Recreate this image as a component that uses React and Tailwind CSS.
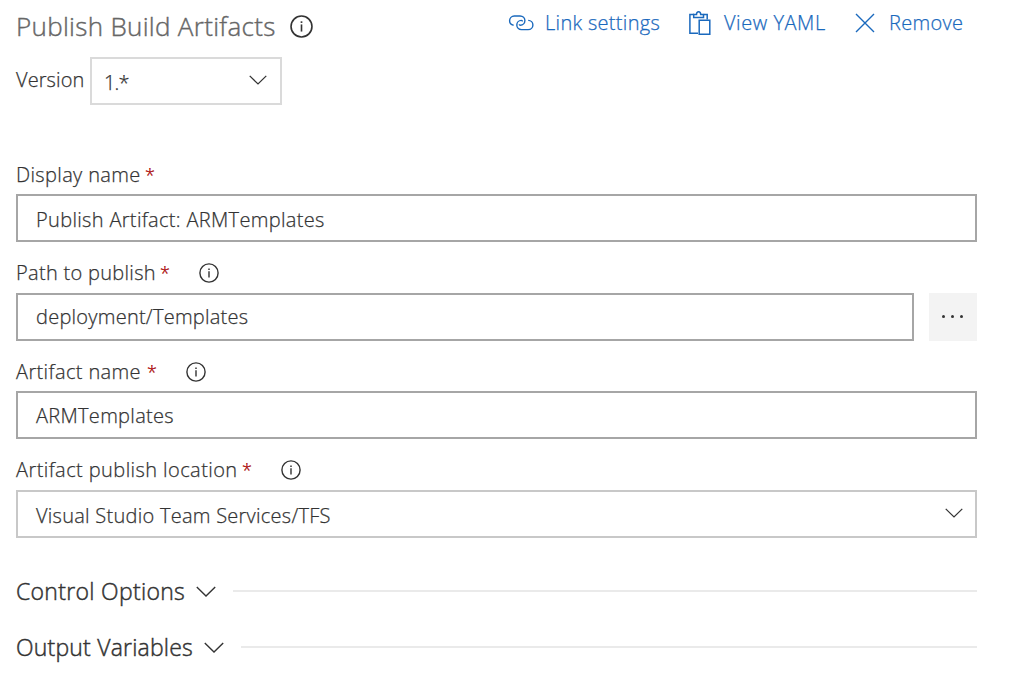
const InfoIcon = ({ className }) => (
  <svg viewBox="0 0 20 20" className={className} fill="none" stroke="#333333" strokeWidth="1.4">
    <circle cx="10" cy="10" r="9.1" />
    <path d="M10 8.2V14.4" strokeWidth="1.4" />
    <path d="M10 5.5V6.9" strokeWidth="1.5" />
  </svg>
);

const Chevron = ({ className }) => (
  <svg viewBox="0 0 20 11" className={className} fill="none" stroke="#333333" strokeWidth="1.4">
    <path d="M0.8 0.9L10 9.9L19.2 0.9" />
  </svg>
);

const LinkIcon = () => (
  <svg viewBox="0 0 26 18" className="h-[18px] w-[26px]" fill="none" stroke="#1a69bd" strokeWidth="1.4">
    <path d="M5.6 11.2C3.2 10.8 1.6 9 1.6 6.7C1.6 4.1 3.6 2 6.3 2H12.1C14.8 2 16.9 4 16.9 6.6C16.9 9.2 14.9 11.2 12.3 11.2C11.8 11.2 11.3 10.7 11.3 10.2" />
    <path d="M20.2 6.4C23 6.4 24.9 8.4 24.9 10.9C24.9 13.6 22.8 15.6 20.1 15.6H13.4C10.8 15.6 8.8 13.6 8.8 11.1C8.8 8.4 10.9 6.4 13.3 6.4C14 6.4 14.5 6.8 14.5 7.4" />
  </svg>
);

const ClipboardIcon = () => (
  <svg viewBox="0 0 24 26" className="h-[26px] w-6" fill="none" stroke="#1a69bd" strokeWidth="1.5">
    <path d="M6 4.6H1.9V23.2H10" />
    <path d="M15.5 4.6H19.2V9.6" />
    <path d="M5.7 7.5V4.5H8.5C8.5 2.8 9.3 1.7 10.6 1.7S12.7 2.8 12.7 4.5H15.5V7.5Z" />
    <path d="M11.2 10.2H21.8V24.2H11.2Z" />
  </svg>
);

const CloseIcon = () => (
  <svg viewBox="0 0 20 20" className="size-5" fill="none" stroke="#1a69bd" strokeWidth="1.4">
    <path d="M1 1L19 19M19 1L1 19" />
  </svg>
);

function Label({ children, text, info }) {
  return (
    <div className="flex h-7 items-center leading-7">
      <span className={text}>{children}</span>
      <span className="ml-[5px] w-[10px] text-[18px]/[26px] text-[#a80000]">*</span>
      {info && <InfoIcon className={info} />}
    </div>
  );
}

function Section({ title, text, line }) {
  return (
    <div className="flex h-8 items-center">
      <h2 className={text}>{title}</h2>
      <Chevron className="ml-[11px] h-[11px] w-5" />
      <div className={line} />
    </div>
  );
}

export default function App() {
  return (
    <main className="h-[692px] w-[1019px] overflow-hidden bg-white pr-[42px] pl-4 font-['Open_Sans','Noto_Sans',sans-serif] text-[20px] font-light tracking-[0.3px] text-[#333333] [-webkit-text-stroke:0.25px]">
      <header className="flex h-[53px] items-center justify-between">
        <div className="flex items-center">
          <h1 className="w-[259px] text-[26px] whitespace-nowrap text-[#666666] [-webkit-text-stroke:0.4px]">Publish Build Artifacts</h1>
          <InfoIcon className="ml-[15px] size-[23px]" />
        </div>
        <nav className="mr-[14px] flex h-[46px] items-center self-start whitespace-nowrap text-[#1a69bd]">
          <LinkIcon />
          <span className="ml-[11px] w-[116px]">Link settings</span>
          <span className="ml-[27px]"><ClipboardIcon /></span>
          <span className="ml-[12px] w-[102px] tracking-[0.55px]">View YAML</span>
          <span className="ml-[29px]"><CloseIcon /></span>
          <span className="ml-[14px] w-[74px]">Remove</span>
        </nav>
      </header>

      <div className="mt-1 flex h-12 items-center">
        <span className="w-[74px] pb-[3px] whitespace-nowrap tracking-[0.1px]">Version</span>
        <div className="flex h-12 w-[192px] items-center justify-between border-2 border-[#dadada] pr-[13px] pl-3">
          <span className="pt-1 tracking-[-0.8px]">1.*</span>
          <Chevron className="mb-0.5 h-[10px] w-[18px]" />
        </div>
      </div>

      <div className="mt-14">
        <Label text="w-[124px] whitespace-nowrap tracking-[0.35px]">Display name</Label>
        <div className="mt-[5px] flex h-12 items-center border-2 border-[#a6a6a6] pt-1 pl-[18px] tracking-[0.33px]">Publish Artifact: ARMTemplates</div>
      </div>

      <div className="mt-[17px]">
        <Label text="w-[139px] whitespace-nowrap" info="ml-[29px] size-5">Path to publish</Label>
        <div className="mt-[6px] flex gap-[15px]">
          <div className="flex h-12 flex-1 items-center border-2 border-[#a6a6a6] pl-[18px] tracking-[0.25px]">deployment/Templates</div>
          <button className="flex size-12 items-center justify-center gap-[6px] bg-[#f3f3f3] pr-0.5 pb-0.5">
            <i className="size-[3px] rounded-full bg-[#333333]" />
            <i className="size-[3px] rounded-full bg-[#333333]" />
            <i className="size-[3px] rounded-full bg-[#333333]" />
          </button>
        </div>
      </div>

      <div className="mt-[17px]">
        <Label text="w-[126px] whitespace-nowrap tracking-[0.38px]" info="ml-[29px] size-5">Artifact name</Label>
        <div className="mt-[5px] flex h-12 items-center border-2 border-[#a6a6a6] pt-0.5 pl-[18px]">ARMTemplates</div>
      </div>

      <div className="mt-[17px]">
        <Label text="w-[221px] whitespace-nowrap tracking-[0.42px]" info="ml-[29px] size-5">Artifact publish location</Label>
        <div className="mt-[6px] flex h-12 items-center justify-between border-2 border-[#c8c8c8] pr-3 pl-[18px]">
          <span className="pt-1 tracking-[0.26px]">Visual Studio Team Services/TFS</span>
          <Chevron className="mb-0.5 h-[10px] w-[18px]" />
        </div>
      </div>

      <div className="mt-[37px] flex flex-col gap-6 text-[23px] [-webkit-text-stroke:0.45px]">
        <Section title="Control Options" text="w-[169px] whitespace-nowrap tracking-[0.3px]" line="ml-[17px] h-0.5 flex-1 bg-[#eaeaea]" />
        <Section title="Output Variables" text="w-[177px] whitespace-nowrap tracking-[0.2px]" line="ml-[17px] h-0.5 flex-1 bg-[#eaeaea]" />
      </div>
    </main>
  );
}
